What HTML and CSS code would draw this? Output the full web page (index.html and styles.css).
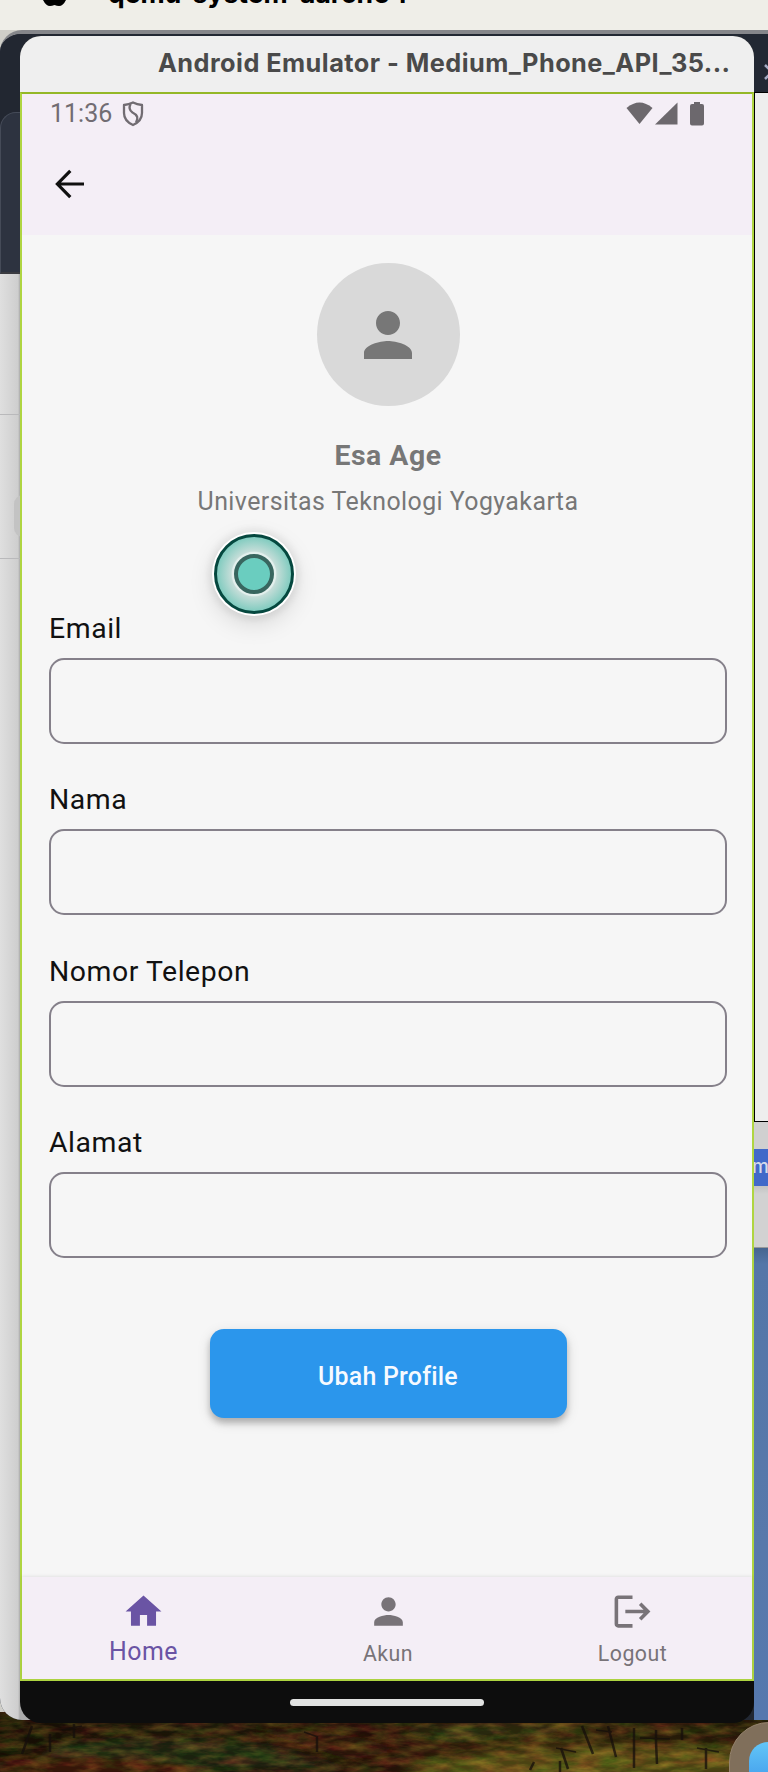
FILE: index.html
```html
<!DOCTYPE html>
<html lang="id">
<head>
<meta charset="utf-8">
<title>Android Emulator</title>
<link rel="stylesheet" href="styles.css">
</head>
<body>
<div class="desktop">
  <svg class="scenery" width="768" height="60" viewBox="0 0 768 60">
    <defs>
      <linearGradient id="hill" x1="0" x2="1" y1="0" y2="0">
        <stop offset="0" stop-color="#221606"/><stop offset=".25" stop-color="#2b1d0c"/><stop offset=".48" stop-color="#34180b"/><stop offset=".7" stop-color="#4b3811"/><stop offset="1" stop-color="#302009"/>
      </linearGradient>
      <filter id="blur" x="-20%" y="-50%" width="140%" height="200%"><feGaussianBlur stdDeviation="4"/></filter>
      <filter id="grain" x="0" y="0" width="100%" height="100%" color-interpolation-filters="sRGB">
        <feTurbulence type="fractalNoise" baseFrequency=".04 .13" numOctaves="4" seed="8"/>
        <feColorMatrix values="1.3 .2 0 0 -.52  .6 .8 0 0 -.52  .3 .1 0 0 -.13  0 0 0 0 .5"/>
      </filter>
    </defs>
    <rect width="768" height="60" fill="url(#hill)"/>
    <g filter="url(#blur)">
      <path d="M60 32Q150 20 270 34L350 58H20Z" fill="#2c3414"/>
      <path d="M0 50Q80 40 190 54V64H0Z" fill="#55230f"/>
      <path d="M250 16Q340 16 400 38L350 48Z" fill="#45200d"/>
      <path d="M400 17Q500 10 570 18L450 29Z" fill="#3c4217"/>
      <path d="M430 48Q600 28 740 38V64H400Z" fill="#75681f"/>
    </g>
    <rect width="768" height="60" filter="url(#grain)" opacity=".7"/>
    <g fill="none" stroke="#150e0b" stroke-width="2.500" opacity=".75">
      <path d="M32 14L22 42M74 12V26M50 22V40M317 24V40M582 14L593 42M608 14L616 45M634 16V56M656 18V30L657 52M682 16V28M706 36V57M561 36L568 57M560 49V60M534 50L530 58"/>
      <path d="M556 36L576 40M596 18L612 20M640 26L670 27M62 18L82 14M304 20L318 25M697 36L719 40" stroke-width="1.500"/>
    </g>
  </svg>

  <div class="menubar">
    <svg class="apple" width="30" height="8" viewBox="0 0 30 8"><path d="M3 0H26Q23 6 19 6Q17 6 14.500 5Q12 6 10 6Q6 6 3 0Z"/></svg>
    <span class="app-name">qemu-system-aarch64</span>
  </div>

  <div class="back-window">
    <div class="back-left">
      <div class="dark"><div class="tab"></div></div>
      <div class="pane row-a"></div>
      <div class="pane row-b"><div class="chip"></div></div>
      <div class="pane row-c"></div>
    </div>
    <div class="back-right">
      <div class="bar"><svg class="close" width="10" height="18" viewBox="0 0 10 18"><path d="M1 2L15 16M1 16L15 2" stroke="#a4abc4" stroke-width="2.500"/></svg></div>
      <div class="sheet"></div>
      <div class="gutter"></div>
      <div class="badge">m</div>
      <div class="footer-pane"></div>
      <div class="blue-pane"></div>
    </div>
  </div>

  <div class="dock"><div class="dock-app"></div></div>

  <div class="emulator">
    <div class="titlebar">Android Emulator - Medium_Phone_API_35...</div>
    <div class="screen">
      <header class="appbar">
        <div class="status">
          <span class="clock">11:36</span>
          <svg class="shield" width="22" height="26" viewBox="0 0 22 26" fill="none" stroke="#716c72" stroke-width="2.300" stroke-linejoin="round"><path d="M11 1.500Q15 3.600 20 4V12Q20 20 11 24Q2 20 2 12V4Q7 3.600 11 1.500Z"/><path d="M8.500 3Q6 8.500 10.500 11.500Q18 15 14 21.500"/></svg>
          <svg class="signals" width="80" height="26" viewBox="0 0 80 26" fill="#6c686d"><path d="M0.500 7Q13.500-4 26.500 7L13.500 23Z"/><path d="M51.500 1.500V23.500H29Z"/><path d="M68 1H74V3H76Q78 3 78 5V22.500Q78 24.500 76 24.500H66Q64 24.500 64 22.500V5Q64 3 66 3H68Z"/></svg>
        </div>
        <svg class="back" width="30" height="30" viewBox="0 0 30 30" fill="none" stroke="#101010" stroke-width="3.200"><path d="M29 15H3M15.300 1.800L2.400 15L15.300 28.200"/></svg>
      </header>
      <main class="content">
        <div class="avatar"><svg width="48" height="48" viewBox="4 4 16 16" fill="#777"><path d="M12 12c2.210 0 4-1.790 4-4s-1.790-4-4-4-4 1.790-4 4 1.790 4 4 4zm0 2c-2.670 0-8 1.340-8 4v2h16v-2c0-2.660-5.330-4-8-4z"/></svg></div>
        <div class="name">Esa Age</div>
        <div class="campus">Universitas Teknologi Yogyakarta</div>
        <div class="form">
          <label class="field"><span>Email</span><input type="text"></label>
          <label class="field"><span>Nama</span><input type="text"></label>
          <label class="field"><span>Nomor Telepon</span><input type="text"></label>
          <label class="field"><span>Alamat</span><input type="text"></label>
        </div>
        <button class="submit" type="button">Ubah Profile</button>
        <div class="pointer"><div class="pointer-dot"></div></div>
      </main>
      <nav class="tabs">
        <div class="item active"><svg width="43" height="43" viewBox="0 0 24 24" fill="#6a54a4"><path d="M10 20v-6h4v6h5v-8h3L12 3 2 12h3v8z"/></svg><span>Home</span></div>
        <div class="item"><svg width="43" height="43" viewBox="0 0 24 24" fill="#787378"><path d="M12 12c2.210 0 4-1.790 4-4s-1.790-4-4-4-4 1.790-4 4 1.790 4 4 4zm0 2c-2.670 0-8 1.340-8 4v2h16v-2c0-2.660-5.330-4-8-4z"/></svg><span>Akun</span></div>
        <div class="item"><svg width="43" height="43" viewBox="0 0 24 24" fill="#787378"><path d="M17 7l-1.410 1.410L18.170 11H8v2h10.170l-2.580 2.580L17 17l5-5zM4 5h8V3H4c-1.100 0-2 .9-2 2v14c0 1.100.9 2 2 2h8v-2H4V5z"/></svg><span>Logout</span></div>
      </nav>
    </div>
    <div class="gesture"><div class="pill"></div></div>
  </div>
</div>
</body>
</html>
```
FILE: styles.css
```css
* { box-sizing: border-box; }
body { margin: 0; background: #2b1d0c; }
svg { display: block; flex: none; }
.desktop { position: relative; width: 768px; height: 1772px; overflow: hidden; font-family: Roboto, "Liberation Sans", sans-serif; background: #cfcec8; }
.scenery { position: absolute; left: 0; bottom: 0; }

.menubar { position: relative; height: 30px; background: #efeee8; display: flex; }
.apple { margin-left: 40px; }
.app-name { margin: -22px 0 0 38px; font: 700 26.5px/30px Inter, sans-serif; color: #000; white-space: nowrap; letter-spacing: 0; }

/* Windows stacked behind the emulator */
.back-window { position: absolute; left: 0; top: 30px; width: 768px; height: 1690px; display: flex; justify-content: space-between; border-top: 4px solid #85868a; border-radius: 22px 0 0 22px; background: #222833; overflow: hidden; }
.back-left { width: 60px; display: flex; flex-direction: column; }
.dark { height: 240px; padding-top: 78px; background: #222731; }
.tab { height: 162px; border: 1px solid #454b58; border-width: 1px 0 2px 1px; border-bottom-color: #3a3b40; border-radius: 16px 0 0 0; background: #2d3340; }
.pane { background: linear-gradient(90deg, #dfdfdf 0, #cecece 18px, #aaa 20px); }
.row-a { height: 141px; border-bottom: 1px solid #b9b9bb; }
.row-b { height: 144px; border-bottom: 1px solid #b9b9bb; padding: 80px 0 0 14px; }
.chip { height: 42px; border-radius: 9px; background: #c3c3c3; }
.row-c { flex: 1; }
.back-right { width: 14px; display: flex; flex-direction: column; }
.bar { height: 58px; padding: 29px 0 0 10px; background: #222833; }
.sheet { height: 1030px; border: 1px solid #000; border-right: 0; background: #eee; }
.gutter { height: 27px; background: #d0d0d0; }
.badge { height: 37px; background: #4169c9; color: #d5daea; font: 500 19px/35px Inter, sans-serif; text-indent: -2px; overflow: hidden; }
.footer-pane { height: 62px; background: linear-gradient(#c3c3c3, #d2d2d2 8px); border-bottom: 1px solid #999; }
.blue-pane { flex: 1; background: linear-gradient(#46658f, #5476a8 16px, #5879ab 300px, #5578ae); }

.dock { position: absolute; left: 729px; top: 1722px; width: 80px; height: 80px; padding: 19px; border: 1px solid #95836e; border-radius: 40px 0 0 0; background: #806f5b; }
.dock-app { width: 60px; height: 60px; border-radius: 19px; background: linear-gradient(#62c6f7, #4ba8ef 30px); }

/* Emulator window */
.emulator { position: absolute; left: 20px; top: 36px; width: 734px; height: 1687px; border-radius: 21px; overflow: hidden; background: #0d0d0d; display: flex; flex-direction: column; }
.titlebar { height: 56px; padding-left: 138px; background: #efefef; color: #4a4a4a; font: 700 25.300px/54px Inter, sans-serif; letter-spacing: .46px; white-space: nowrap; }
.screen { height: 1589px; border: 2px solid #afd541; border-top: 2px solid #94b827; background: #f6f6f6; display: flex; flex-direction: column; }
.appbar { height: 141px; padding: 7px 46px 0 28px; background: #f4eef6; }
.status { display: flex; height: 26px; }
.clock { font-size: 25px; line-height: 26px; color: #716c72; width: 72px; }
.signals { margin-left: auto; }
.back { margin: 42px 0 0 5px; }
.content { position: relative; flex: 1; padding: 28px 25px 0 27px; display: flex; flex-direction: column; align-items: center; color: #777; }
.avatar { width: 143px; height: 143px; border-radius: 50%; background: #d9d9d9; display: grid; place-items: center; }
.name { margin-top: 32px; font-size: 28.400px; line-height: 36px; font-weight: 700; letter-spacing: .5px; }
.campus { margin-top: 12px; font-size: 24.900px; line-height: 32px; letter-spacing: .44px; }
.form { align-self: stretch; margin-top: 92px; display: flex; flex-direction: column; gap: 37.300px; }
.field { display: flex; flex-direction: column; }
.field span { height: 48px; font-size: 28.400px; line-height: 38px; letter-spacing: .55px; color: #111; }
.field input { width: 678px; height: 86px; border: 2px solid #85808a; border-radius: 15px; background: none; }
.submit { width: 357px; height: 89px; margin-top: 71px; padding: 6px 0 0; border: 0; border-radius: 14px; background: #2b96ec; color: #f6faff; font: 500 24.900px Roboto, sans-serif; letter-spacing: .24px; box-shadow: 0 5px 6px rgba(0,0,0,.22), 0 4px 14px rgba(0,0,0,.12); }
.pointer { position: absolute; left: 192px; top: 299px; width: 80px; height: 80px; border: 3px solid #05483f; border-radius: 50%; background: radial-gradient(circle, #fff 20px, #c4ddd8 23px, #78c9bc 39px); display: grid; place-items: center; box-shadow: 0 0 0 2px #fff, 0 0 6px 6px rgba(0,0,0,.05), 0 8px 26px rgba(0,0,0,.15); }
.pointer-dot { width: 40px; height: 40px; border: 4px solid #38665f; border-radius: 50%; background: #6acdbf; box-shadow: 0 0 0 2px #e3f0ed; }
.tabs { height: 102px; display: grid; grid-template-columns: 243px 246px 1fr; background: #f4eef6; box-shadow: 0 -1px 3px rgba(0,0,0,.08); }
.item { display: flex; flex-direction: column; align-items: center; padding-top: 13px; color: #787378; font-size: 21.300px; letter-spacing: .5px; }
.item span { line-height: 30px; margin-top: 6px; }
.item.active { padding-left: 0; }
.item.active span { margin-top: 4px; font-size: 24.900px; color: #6a54a4; }
.item:last-child { padding-left: 2px; }
.gesture { flex: 1; display: flex; justify-content: center; padding-top: 18px; }
.pill { width: 194px; height: 7px; border-radius: 4px; background: #e1e2e1; }
```
